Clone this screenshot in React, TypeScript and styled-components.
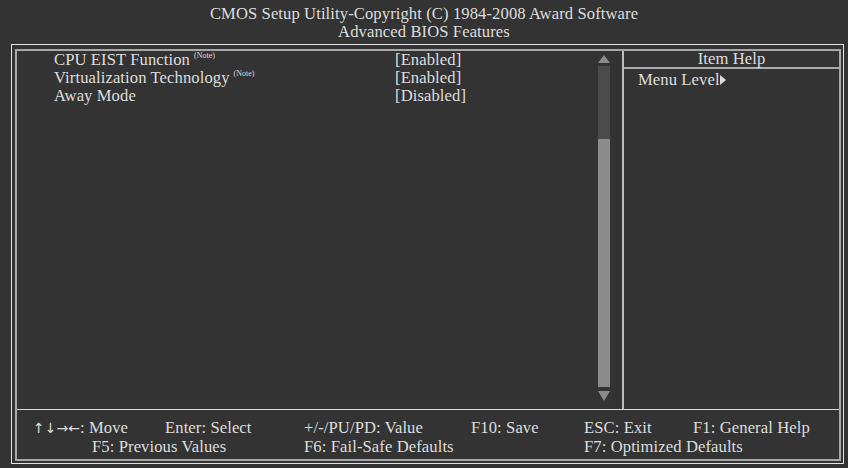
import React from 'react';
import styled, { createGlobalStyle } from 'styled-components';

const GlobalStyle = createGlobalStyle`
  html, body {
    margin: 0;
    padding: 0;
    background: #333333;
  }
`;

const Screen = styled.div`
  width: 848px;
  height: 468px;
  background: #333333;
  color: #dedede;
  font-family: "Liberation Serif", "Times New Roman", serif;
  font-size: 16.6px;
  letter-spacing: 0.1px;
  display: flex;
  flex-direction: column;
  overflow: hidden;
`;

const Title = styled.header`
  height: 44px;
  box-sizing: border-box;
  padding-top: 5px;
  text-align: center;
  line-height: 18px;
`;

const OuterFrame = styled.div`
  margin-left: 11px;
  width: 833px;
  height: 420px;
  box-sizing: border-box;
  border: 1px solid #e2e2e2;
  padding: 4px 2px 2px 3px;
`;

const InnerFrame = styled.div`
  height: 100%;
  box-sizing: border-box;
  border: 2px solid #a8a8a8;
  display: flex;
  flex-direction: column;
`;

const Main = styled.div`
  height: 358px;
  display: grid;
  grid-template-columns: 581px 12px 12px 2px 1fr;
`;

const ItemList = styled.div`
  padding-left: 37px;
  line-height: 18px;
`;

const ItemRow = styled.div`
  display: flex;
  height: 18px;
  white-space: nowrap;
`;

const ItemLabel = styled.span`
  width: 341px;
`;

const Note = styled.sup`
  font-size: 8px;
  letter-spacing: 0;
  margin-left: 4px;
  vertical-align: 7px;
  line-height: 0;
`;

const ScrollBar = styled.div`
  display: flex;
  flex-direction: column;
  align-items: center;
  padding-top: 4px;
`;

const Arrow = styled.svg<{ $gap: number }>`
  display: block;
  margin-top: ${(p) => p.$gap}px;
`;

const Track = styled.div`
  width: 12px;
  height: 321px;
  margin-top: 3px;
  background: #4b4b4b;
  display: flex;
  flex-direction: column;
  justify-content: flex-end;
`;

const Thumb = styled.div`
  width: 100%;
  background: #8b8b8b;
`;

const Divider = styled.div`
  background: #bdbdbd;
`;

const HelpPanel = styled.div`
  display: flex;
  flex-direction: column;
`;

const HelpHeader = styled.div`
  height: 16px;
  line-height: 16px;
  text-align: center;
  border-bottom: 2px solid #ababab;
`;

const HelpLine = styled.div`
  padding-left: 14px;
  margin-top: 1px;
  line-height: 19px;
  display: flex;
  align-items: center;
`;

const Footer = styled.div`
  flex: 1;
  border-top: 1px solid #dcdcdc;
  padding: 8px 0 0 16px;
  display: grid;
  grid-template-columns: 132px 139px 167px 113px 109px 1fr;
  grid-auto-rows: 19px;
  line-height: 19px;
  white-space: nowrap;
`;

const Key = styled.span<{ $span?: number; $indent?: number }>`
  grid-column: span ${(p) => p.$span ?? 1};
  padding-left: ${(p) => p.$indent ?? 0}px;
`;

const Arrows = styled.span`
  font-family: "DejaVu Sans", sans-serif;
  font-size: 14px;
  letter-spacing: 0;
`;

const items = [
  { label: 'CPU EIST Function', value: '[Enabled]', note: true },
  { label: 'Virtualization Technology', value: '[Enabled]', note: true },
  { label: 'Away Mode', value: '[Disabled]', note: false },
];

export default function App() {
  const thumbShare = 248 / 321;

  return (
    <Screen>
      <GlobalStyle />
      <Title>
        <div>CMOS Setup Utility-Copyright (C) 1984-2008 Award Software</div>
        <div>Advanced BIOS Features</div>
      </Title>
      <OuterFrame>
        <InnerFrame>
          <Main>
            <ItemList>
              {items.map((item) => (
                <ItemRow key={item.label}>
                  <ItemLabel>
                    {item.label}
                    {item.note && <Note>(Note)</Note>}
                  </ItemLabel>
                  <span>{item.value}</span>
                </ItemRow>
              ))}
            </ItemList>
            <ScrollBar>
              <Arrow $gap={0} width="12" height="8" viewBox="0 0 12 8">
                <polygon points="6,0 12,8 0,8" fill="#8b8b8b" />
              </Arrow>
              <Track>
                <Thumb style={{ height: `${thumbShare * 100}%` }} />
              </Track>
              <Arrow $gap={4} width="12" height="10" viewBox="0 0 12 10">
                <polygon points="0,0 12,0 6,10" fill="#8b8b8b" />
              </Arrow>
            </ScrollBar>
            <div />
            <Divider />
            <HelpPanel>
              <HelpHeader>Item Help</HelpHeader>
              <HelpLine>
                Menu Level
                <svg width="6" height="10" viewBox="0 0 6 10">
                  <polygon points="0,0 6,5 0,10" fill="#dedede" />
                </svg>
              </HelpLine>
            </HelpPanel>
          </Main>
          <Footer>
            <Key>
              <Arrows>↑↓→←</Arrows>: Move
            </Key>
            <Key>Enter: Select</Key>
            <Key>+/-/PU/PD: Value</Key>
            <Key>F10: Save</Key>
            <Key>ESC: Exit</Key>
            <Key>F1: General Help</Key>
            <Key $span={2} $indent={59}>F5: Previous Values</Key>
            <Key $span={2}>F6: Fail-Safe Defaults</Key>
            <Key $span={2}>F7: Optimized Defaults</Key>
          </Footer>
        </InnerFrame>
      </OuterFrame>
    </Screen>
  );
}
